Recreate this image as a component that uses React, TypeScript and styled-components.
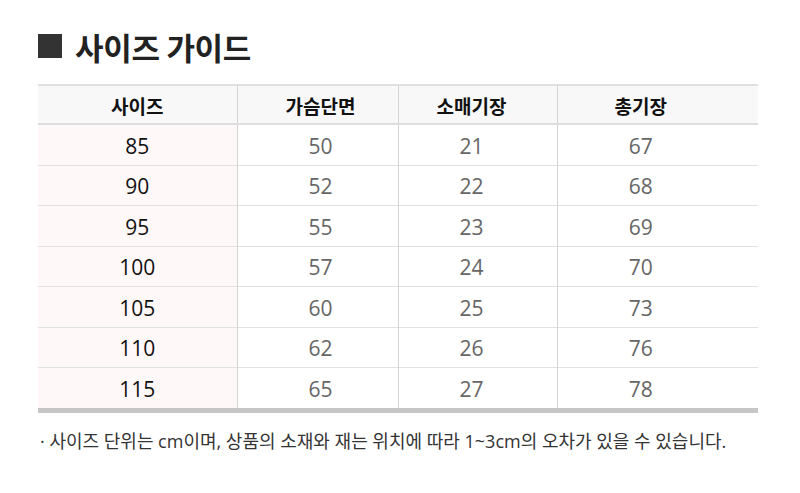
import styled, { createGlobalStyle } from 'styled-components'

const GlobalStyle = createGlobalStyle`
  body {
    margin: 0;
    background: #fff;
    font-family: 'Open Sans', 'Noto Sans CJK KR', sans-serif;
  }
`

// positive shift moves the cell text left, negative moves it right
const shiftPadding = (shift: number, top: number) =>
  `padding: ${top}px ${Math.max(shift, 0)}px 0 ${Math.max(-shift, 0)}px;`

const S = {
  Page: styled.div`
    width: 800px;
    height: 493px;
    padding: 27px 0 0 38px;
    box-sizing: border-box;
  `,
  Title: styled.h2`
    display: flex;
    align-items: center;
    gap: 13px;
    margin: 0 0 19px;
    height: 38px;
    font-family: 'Noto Sans CJK KR', sans-serif;
    font-size: 31px;
    font-weight: 700;
    color: #222;
    letter-spacing: -0.3px;
  `,
  Square: styled.span`
    width: 24px;
    height: 24px;
    background: #333;
  `,
  Table: styled.table`
    width: 720px;
    border-collapse: collapse;
    table-layout: fixed;
    border-top: 2px solid #e0e0e0;
    border-bottom: 5px solid #c6c6c6;
  `,
  HeadCell: styled.th<{ $shift: number }>`
    height: 36px;
    ${({ $shift }) => shiftPadding($shift, 1)}
    line-height: 1;
    background: #f8f8f8;
    border-bottom: 2px solid #dedede;
    border-left: 1px solid #d4d4d4;
    font-family: 'Noto Sans CJK KR', sans-serif;
    font-size: 19px;
    font-weight: 700;
    color: #111;
    &:first-child { border-left: none; }
  `,
  Row: styled.tr`
    & + & td { border-top: 1px solid #e2e2e2; }
  `,
  Cell: styled.td<{ $size?: boolean; $shift: number }>`
    height: 36.5px;
    ${({ $shift }) => shiftPadding($shift, 3)}
    line-height: 1;
    text-align: center;
    border-left: 1px solid #d4d4d4;
    background: ${({ $size }) => ($size ? '#fff8f8' : '#fff')};
    font-size: 21px;
    color: ${({ $size }) => ($size ? '#111' : '#666')};
    &:first-child { border-left: none; }
  `,
  Note: styled.p`
    margin: 17px 0 0 2px;
    font-family: 'Open Sans', 'Noto Sans CJK KR', sans-serif;
    font-size: 18px;
    line-height: 1.3;
    color: #333;
    white-space: nowrap;
  `,
}

const headers = ['사이즈', '가슴단면', '소매기장', '총기장']
const widths = [199, 161, 159, 201]
// text in the right-hand columns is not quite centred in its cell
const shifts = [0, -6, 12, 34]
const rows = [
  [85, 50, 21, 67],
  [90, 52, 22, 68],
  [95, 55, 23, 69],
  [100, 57, 24, 70],
  [105, 60, 25, 73],
  [110, 62, 26, 76],
  [115, 65, 27, 78],
]

export default function App() {
  return (
    <>
      <GlobalStyle />
      <S.Page>
        <S.Title>
          <S.Square />
          사이즈 가이드
        </S.Title>
        <S.Table>
          <colgroup>
            {widths.map((w, i) => (
              <col key={i} style={{ width: w }} />
            ))}
          </colgroup>
          <thead>
            <tr>
              {headers.map((h, i) => (
                <S.HeadCell key={h} $shift={shifts[i]}>
                  {h}
                </S.HeadCell>
              ))}
            </tr>
          </thead>
          <tbody>
            {rows.map((r) => (
              <S.Row key={r[0]}>
                {r.map((v, i) => (
                  <S.Cell key={i} $size={i === 0} $shift={shifts[i]}>
                    {v}
                  </S.Cell>
                ))}
              </S.Row>
            ))}
          </tbody>
        </S.Table>
        <S.Note>· 사이즈 단위는 cm이며, 상품의 소재와 재는 위치에 따라 1~3cm의 오차가 있을 수 있습니다.</S.Note>
      </S.Page>
    </>
  )
}
